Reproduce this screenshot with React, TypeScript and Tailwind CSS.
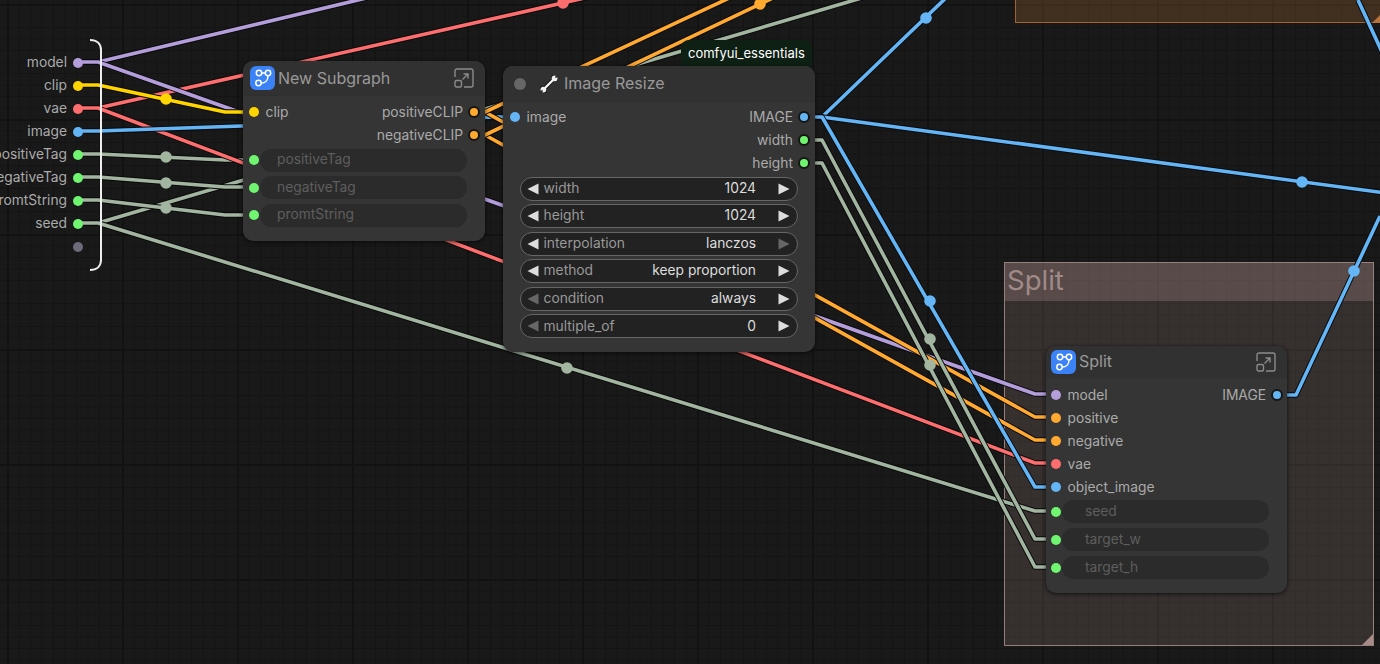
const FONT = "font-['Inter','Liberation_Sans',sans-serif]";

type Link = { color: string; d: string; dots?: [number, number][] };

const PURPLE = "#b39ddb";
const YELLOW = "#ffd500";
const RED = "#ff6e6e";
const BLUE = "#64b5f6";
const ORANGE = "#ffa931";
const SAGE = "#a1b5a0";

const links: Link[] = [
  { color: SAGE, d: "M78 223H98L865 -3" },
  { color: SAGE, d: "M78 223H98L1035 511H1047", dots: [[567, 368]] },
  { color: SAGE, d: "M78 154H98L225 160H243", dots: [[166, 157]] },
  { color: SAGE, d: "M78 177H98L225 187H243", dots: [[166, 183]] },
  { color: SAGE, d: "M78 200H98L225 215H243", dots: [[166, 208]] },
  { color: RED, d: "M78 108H98L620 -10", dots: [[563, 3]] },
  { color: RED, d: "M78 108H98L1035 463H1047" },
  { color: PURPLE, d: "M78 62H98L400 -10" },
  { color: PURPLE, d: "M78 62H98L1035 394H1047" },
  { color: YELLOW, d: "M78 85H98L225 112H243", dots: [[166, 99]] },
  { color: BLUE, d: "M78 131H98L495 117H515" },
  { color: ORANGE, d: "M474 112H485L1035 417H1047" },
  { color: ORANGE, d: "M474 135H485L1035 440H1047" },
  { color: ORANGE, d: "M474 112H485L740 -7" },
  { color: ORANGE, d: "M474 135H485L775 -3", dots: [[760, 4]] },
  { color: SAGE, d: "M804 140H822L1035 539H1047", dots: [[930, 339]] },
  { color: SAGE, d: "M804 163H822L1035 567H1047", dots: [[930, 365]] },
  { color: BLUE, d: "M804 117H822L950 -6", dots: [[926, 18]] },
  { color: BLUE, d: "M804 117H822L1400 195", dots: [[1302, 182]] },
  { color: BLUE, d: "M804 117H822L1035 487H1047", dots: [[930, 301]] },
  { color: BLUE, d: "M1276 395H1296L1380 216", dots: [[1354, 271]] },
  { color: BLUE, d: "M1358 0L1382 52" },
];

function Links() {
  return (
    <svg className="absolute inset-0" width="1380" height="664" fill="none">
      {links.map((l, i) => (
        <g key={i}>
          <path d={l.d} stroke="#0a0a0a" strokeWidth="5.5" strokeLinejoin="round" />
          <path d={l.d} stroke={l.color} strokeWidth="3.6" strokeLinejoin="round" />
          {l.dots?.map(([x, y]) => (
            <circle key={x} cx={x} cy={y} r="5.8" fill={l.color} />
          ))}
        </g>
      ))}
      <path d="M90 40C97 40 101 44 101 50V260C101 266 97 270 90 270" stroke="#eeeeee" strokeWidth="2" />
    </svg>
  );
}

function SubgraphIcon() {
  return (
    <div className="flex h-[24px] w-[25px] shrink-0 items-center justify-center rounded-[6px] bg-[#3b82f6]">
      <svg width="25" height="24" viewBox="0 0 25 24" fill="none" stroke="#ffffff" strokeWidth="1.5">
        <circle cx="9" cy="7" r="2.7" />
        <circle cx="18" cy="7" r="2.7" />
        <circle cx="8.5" cy="17" r="2.7" />
        <path d="M11.7 7H15.3M18 9.7C18 14 15.5 17 11.2 17" />
      </svg>
    </div>
  );
}

function ExpandIcon() {
  return (
    <svg width="20" height="20" viewBox="0 0 20 20" fill="none" stroke="#8a8a8a" strokeWidth="1.4" className="shrink-0">
      <path d="M1 9V3a2 2 0 0 1 2-2h14a2 2 0 0 1 2 2v14a2 2 0 0 1-2 2H10" />
      <rect x="1" y="12.5" width="6.5" height="6.5" rx="1.5" />
      <path d="M8.5 11.5L14 6M9.5 6H14V10.5" />
    </svg>
  );
}

function WrenchIcon() {
  return (
    <svg width="18" height="18" viewBox="0 0 18 18" fill="none" className="shrink-0">
      <path d="M3.5 14.5L14.5 3.5" stroke="#111111" strokeWidth="4" />
      <circle cx="14.6" cy="3.4" r="3.6" fill="#111111" />
      <circle cx="3.4" cy="14.6" r="3.6" fill="#111111" />
      <path d="M3.5 14.5L14.5 3.5" stroke="#f2f2f2" strokeWidth="2.4" />
      <circle cx="14.6" cy="3.4" r="2.9" fill="#f2f2f2" />
      <circle cx="3.4" cy="14.6" r="2.9" fill="#f2f2f2" />
      <path d="M15.4 2.6L17.6 0.4M2.6 15.4L0.4 17.6" stroke="#313131" strokeWidth="1.5" />
    </svg>
  );
}

function Dot({ color, ring }: { color: string; ring?: boolean }) {
  return (
    <span
      className={
        ring
          ? "h-[12px] w-[12px] shrink-0 rounded-full border-2 border-[#151515]"
          : "mx-px h-[10px] w-[10px] shrink-0 rounded-full"
      }
      style={{ backgroundColor: color }}
    />
  );
}

function SlotRow({ input, output }: { input?: [string, string]; output?: [string, string] }) {
  return (
    <div className="flex h-[23px] items-center justify-between text-[13.8px] text-[#aaaaaa]">
      <div className="flex items-center gap-[5.5px]">
        {input && <Dot color={input[1]} />}
        {input && <span>{input[0]}</span>}
      </div>
      <div className="flex items-center gap-[5px]">
        {output && <span>{output[0]}</span>}
        {output && <Dot color={output[1]} ring />}
      </div>
    </div>
  );
}

function EmptyWidget({ label, indent }: { label: string; indent: string }) {
  return (
    <div className="flex h-[23px] items-center">
      <Dot color="#70f570" />
      <div className={`flex h-[23px] w-[207px] items-center rounded-full bg-[#2b2b2b] pb-[1px] text-[13.8px] text-[#5e5e5e] ${indent}`}>
        {label}
      </div>
    </div>
  );
}

function Arrow({ right, dim }: { right?: boolean; dim?: boolean }) {
  return (
    <svg width="12" height="12" viewBox="0 0 12 12" className="shrink-0">
      <path d={right ? "M0.5 0.5L11.5 6L0.5 11.5Z" : "M11.5 0.5L0.5 6L11.5 11.5Z"} fill={dim ? "#666666" : "#dddddd"} />
    </svg>
  );
}

function Widget({ label, value, dimLeft, dimRight }: { label: string; value: string; dimLeft?: boolean; dimRight?: boolean }) {
  return (
    <div className="flex h-[24px] items-center rounded-full border border-[#666666] bg-[#222222] pl-[6px] pr-[7px] text-[13.8px]">
      <Arrow dim={dimLeft} />
      <span className="ml-[4.5px] pb-[1px] text-[#999999]">{label}</span>
      <span className="ml-auto mr-[22px] pb-[1px] text-[#dddddd]">{value}</span>
      <Arrow right dim={dimRight} />
    </div>
  );
}

function SideLabels() {
  const rows: [string, string][] = [
    ["model", PURPLE],
    ["clip", YELLOW],
    ["vae", RED],
    ["image", BLUE],
    ["positiveTag", "#70f570"],
    ["negativeTag", "#70f570"],
    ["promtString", "#70f570"],
    ["seed", "#70f570"],
    ["", "#6b6b7a"],
  ];
  return (
    <div className="absolute left-0 top-[51px] flex w-[84px] flex-col text-[13.8px] text-[#aaaaaa]">
      {rows.map(([name, color]) => (
        <div key={color + name} className="flex h-[23px] items-center justify-end gap-[5px] whitespace-nowrap">
          <span className="pb-[1px]">{name}</span>
          <Dot color={color} />
        </div>
      ))}
    </div>
  );
}

export default function App() {
  return (
    <div
      className={`relative h-[664px] w-[1380px] overflow-hidden bg-[#191919] bg-[linear-gradient(#121212_2px,transparent_2px),linear-gradient(90deg,#121212_2px,transparent_2px),linear-gradient(#141414_1px,transparent_1px),linear-gradient(90deg,#141414_1px,transparent_1px)] bg-[size:115px_115px,115px_115px,11.5px_11.5px,11.5px_11.5px] bg-[position:7px_4px,7px_4px,7px_4px,7px_4px] ${FONT}`}
    >
      {/* groups */}
      <div className="absolute left-[1015px] top-[-60px] h-[83px] w-[420px] border border-[#a0622f] bg-[#a0622f]/30" />
      <div className="absolute left-[1372px] top-[13px] h-0 w-0 border-b-[10px] border-l-[10px] border-b-[#b8733a] border-l-transparent" />
      <div className="absolute left-[1004px] top-[262px] flex h-[384px] w-[370px] flex-col border border-[#957f7d] bg-[#a88a88]/20">
        <div className="h-[38px] bg-[#a88a88]/30 pl-[2px] text-[27.5px] leading-[34px] text-[#a08a88]">Split</div>
        <div className="mt-auto ml-auto h-0 w-0 border-b-[11px] border-l-[11px] border-b-[#a88a88] border-l-transparent" />
      </div>

      <Links />
      <SideLabels />

      {/* New Subgraph */}
      <div className="absolute left-[243px] top-[61px] h-[180px] w-[242px] rounded-[10px] bg-[#353535] shadow-[0_1px_4px_#000000aa]">
        <div className="flex h-[35px] items-center rounded-t-[10px] border-b border-[#2f2f2f] bg-[#313131] pl-[7px] pr-[11px] text-[16px] text-[#999999]">
          <SubgraphIcon />
          <span className="ml-[3px]">New Subgraph</span>
          <span className="ml-auto"><ExpandIcon /></span>
        </div>
        <div className="flex flex-col px-[5px] pt-[4.5px]">
          <SlotRow input={["clip", YELLOW]} output={["positiveCLIP", ORANGE]} />
          <SlotRow output={["negativeCLIP", ORANGE]} />
          <div className="mt-[2px] flex flex-col gap-[4.5px]">
            <EmptyWidget label="positiveTag" indent="pl-[17px]" />
            <EmptyWidget label="negativeTag" indent="pl-[17px]" />
            <EmptyWidget label="promtString" indent="pl-[17px]" />
          </div>
        </div>
      </div>

      {/* Image Resize */}
      <div className="absolute left-[681px] top-[40px] rounded-t-[8px] bg-[#0e2014] px-[7px] pb-[8px] pt-[4px] text-[13px] leading-[18px] text-white">
        comfyui_essentials
      </div>
      <div className="absolute left-[503px] top-[66px] h-[286px] w-[312px] rounded-[10px] bg-[#353535] shadow-[0_1px_4px_#000000aa]">
        <div className="flex h-[36px] items-center rounded-t-[10px] border-b border-[#2f2f2f] bg-[#313131] pl-[11px] text-[16px] text-[#999999]">
          <span className="h-[12px] w-[12px] rounded-full bg-[#666666]" />
          <span className="ml-[14px]"><WrenchIcon /></span>
          <span className="ml-[6px] pb-[2px]">Image Resize</span>
        </div>
        <div className="flex flex-col pl-[6px] pr-[5px] pt-[3.5px]">
          <SlotRow input={["image", BLUE]} output={["IMAGE", BLUE]} />
          <SlotRow output={["width", "#70f570"]} />
          <SlotRow output={["height", "#70f570"]} />
        </div>
        <div className="mt-[2px] flex flex-col gap-[3.6px] pl-[17px] pr-[17px]">
          <Widget label="width" value="1024" />
          <Widget label="height" value="1024" />
          <Widget label="interpolation" value="lanczos" dimRight />
          <Widget label="method" value="keep proportion" />
          <Widget label="condition" value="always" dimLeft />
          <Widget label="multiple_of" value="0" dimLeft />
        </div>
      </div>

      {/* Split */}
      <div className="absolute left-[1046px] top-[346px] h-[247px] w-[241px] rounded-[10px] bg-[#353535] shadow-[0_1px_4px_#000000aa]">
        <div className="flex h-[32px] items-center rounded-t-[10px] border-b border-[#2f2f2f] bg-[#313131] pl-[5px] pr-[11px] text-[16px] text-[#999999]">
          <SubgraphIcon />
          <span className="ml-[3px] pb-[2px]">Split</span>
          <span className="ml-auto"><ExpandIcon /></span>
        </div>
        <div className="flex flex-col px-[4px] pt-[5.5px]">
          <SlotRow input={["model", PURPLE]} output={["IMAGE", BLUE]} />
          <SlotRow input={["positive", ORANGE]} />
          <SlotRow input={["negative", ORANGE]} />
          <SlotRow input={["vae", RED]} />
          <SlotRow input={["object_image", BLUE]} />
          <div className="mt-[1.5px] flex flex-col gap-[5px]">
            <EmptyWidget label="seed" indent="pl-[23px]" />
            <EmptyWidget label="target_w" indent="pl-[23px]" />
            <EmptyWidget label="target_h" indent="pl-[23px]" />
          </div>
        </div>
      </div>
    </div>
  );
}
